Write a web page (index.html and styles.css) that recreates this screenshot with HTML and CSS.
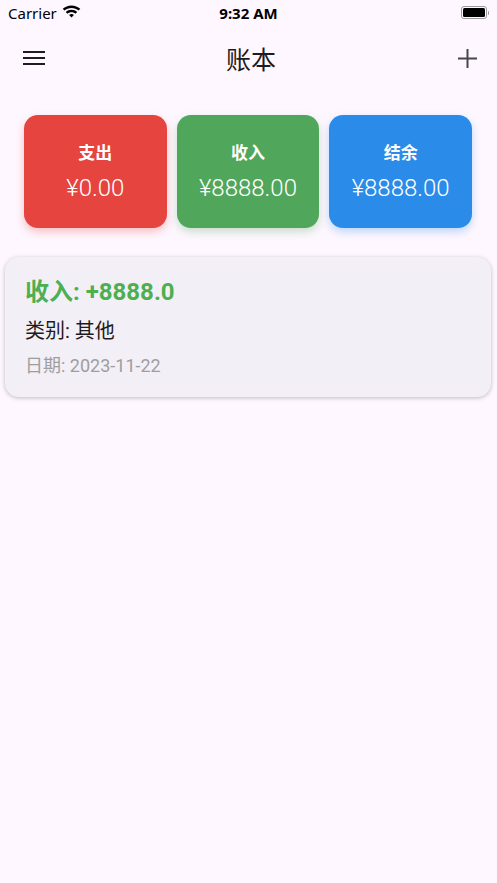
FILE: index.html
```html
<!DOCTYPE html>
<html lang="zh">
<head>
    <meta charset="UTF-8">
    <title>账本</title>
    <link rel="stylesheet" href="styles.css">
</head>
<body>

<div class="status-bar">
    <div class="carrier">
        Carrier
        <svg class="wifi" width="19" height="14" viewBox="0 0 18 13">
            <path d="M9 1.2c3.2 0 6.1 1.2 8.3 3.2l-1.6 1.7C13.9 4.5 11.6 3.6 9 3.6S4.1 4.5 2.3 6.1L0.7 4.4C2.9 2.4 5.8 1.2 9 1.2z" fill="#000"/>
            <path d="M9 5.3c2.1 0 4 .8 5.4 2.1l-1.6 1.7C11.8 8.2 10.5 7.7 9 7.7s-2.8.5-3.8 1.4L3.6 7.4C5 6.1 6.9 5.3 9 5.3z" fill="#000"/>
            <path d="M9 9.4c.9 0 1.7.3 2.3.9L9 12.7 6.7 10.3c.6-.6 1.4-.9 2.3-.9z" fill="#000"/>
        </svg>
    </div>
    <div class="time">9:32 AM</div>
    <div class="battery">
        <span class="battery-body"><span class="battery-level"></span></span>
        <span class="battery-tip"></span>
    </div>
</div>

<header class="app-bar">
    <button class="icon-btn" aria-label="menu">
        <svg width="22" height="16" viewBox="0 0 22 16">
            <rect x="0" y="1" width="22" height="2" fill="#1d1b20"/>
            <rect x="0" y="7" width="22" height="2" fill="#1d1b20"/>
            <rect x="0" y="13" width="22" height="2" fill="#1d1b20"/>
        </svg>
    </button>
    <h1 class="title">账本</h1>
    <button class="icon-btn" aria-label="add">
        <svg width="19" height="19" viewBox="0 0 19 19">
            <rect x="8.5" y="0" width="2" height="19" fill="#49454f"/>
            <rect x="0" y="8.5" width="19" height="2" fill="#49454f"/>
        </svg>
    </button>
</header>

<div class="summary">
    <div class="summary-card expense">
        <div class="summary-title">支出</div>
        <div class="summary-amount">¥0.00</div>
    </div>
    <div class="summary-card income">
        <div class="summary-title">收入</div>
        <div class="summary-amount">¥8888.00</div>
    </div>
    <div class="summary-card balance">
        <div class="summary-title">结余</div>
        <div class="summary-amount">¥8888.00</div>
    </div>
</div>

<div class="record-list">
    <div class="record">
        <div class="record-amount">收入: +8888.0</div>
        <div class="record-category">类别: 其他</div>
        <div class="record-date">日期: 2023-11-22</div>
    </div>
</div>

</body>
</html>
```

FILE: styles.css
```css
body {
    margin: 0;
    background: #fef7ff;
    font-family: Roboto, "Noto Sans CJK SC", sans-serif;
    color: #1d1b20;
    width: 497px;
    height: 883px;
    overflow: hidden;
}
.status-bar {
    height: 25px;
    display: flex;
    align-items: center;
    justify-content: space-between;
    padding: 0 8px;
    font-family: "Noto Sans", "Liberation Sans", sans-serif;
    font-size: 15px;
    color: #000;
    position: relative;
}
.carrier {
    display: flex;
    align-items: center;
    gap: 5px;
}
.wifi {
    margin-top: -3px;
}
.time {
    position: absolute;
    left: 0;
    right: 0;
    text-align: center;
    font-weight: bold;
    pointer-events: none;
}
.battery {
    display: flex;
    align-items: center;
}
.battery-body {
    width: 26px;
    height: 13px;
    border: 1px solid #9a9a9a;
    border-radius: 3px;
    padding: 1px;
    box-sizing: border-box;
    display: flex;
}
.battery-level {
    flex: 1;
    background: #000;
    border-radius: 1.5px;
}
.battery-tip {
    width: 1.5px;
    height: 4px;
    background: #9a9a9a;
    margin-left: 1px;
    border-radius: 0 1px 1px 0;
}
.app-bar {
    height: 66px;
    display: flex;
    align-items: center;
    justify-content: space-between;
    padding: 0 18px 0 23px;
}
.icon-btn {
    background: none;
    border: none;
    padding: 0;
    width: 22px;
    height: 22px;
    display: flex;
    align-items: center;
    justify-content: center;
}
.title {
    margin: 0;
    font-size: 25px;
    font-weight: 400;
    color: #1d1b20;
}
.summary {
    display: grid;
    grid-template-columns: repeat(3, 1fr);
    gap: 10px;
    padding: 24px 25px 0 24px;
}
.summary-card {
    height: 113px;
    border-radius: 14px;
    color: #fff;
    display: flex;
    flex-direction: column;
    align-items: center;
    justify-content: center;
    gap: 9px;
}
.expense {
    background: #e5443f;
    box-shadow: 0 4px 9px rgba(229, 68, 63, 0.3);
}
.income {
    background: #50a65a;
    box-shadow: 0 4px 9px rgba(80, 166, 90, 0.3);
}
.balance {
    background: #2a8be8;
    box-shadow: 0 4px 9px rgba(42, 139, 232, 0.3);
}
.summary-title {
    font-size: 17px;
    font-weight: bold;
    line-height: 22px;
    margin-top: 2px;
}
.summary-amount {
    font-size: 24px;
    line-height: 30px;
    font-weight: 300;
}
.record-list {
    padding: 29px 6px 0 5px;
}
.record {
    background: #f3eff7;
    border-radius: 14px;
    padding: 19px 20px 19px 20px;
    box-shadow: 0 1px 4px rgba(0, 0, 0, 0.25);
}
.record-amount {
    font-size: 24px;
    line-height: 32px;
    font-weight: bold;
    color: #4caf50;
}
.record-category {
    font-size: 20px;
    line-height: 26px;
    margin-top: 10px;
    color: #1d1b20;
}
.record-date {
    font-size: 18px;
    line-height: 24px;
    margin-top: 10px;
    color: #9e9e9e;
}
```
